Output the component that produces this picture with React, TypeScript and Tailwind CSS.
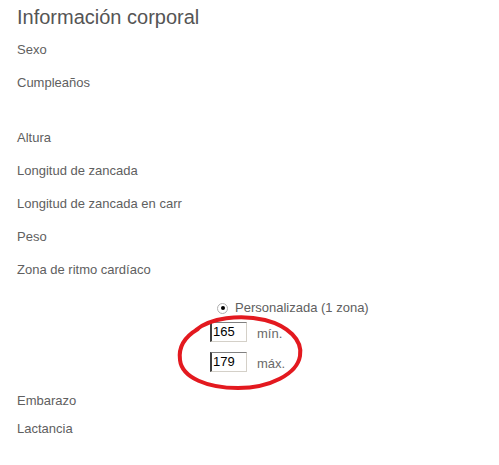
import React from "react";

const Label = ({ children, h = "h-[33px] leading-[33px]" }: { children: React.ReactNode; h?: string }) => (
  <div className={`${h} text-[13px] text-[#606060] whitespace-nowrap`}>{children}</div>
);

const Field = ({ value, unit, className }: { value: string; unit: string; className?: string }) => (
  <div className={`flex items-center ${className ?? ""}`}>
    <div className="w-[37px] h-[20px] border-t border-t-[#808080] border-l-2 border-l-[#404040] border-r border-r-[#d4d0c8] border-b border-b-[#d4d0c8] bg-white pl-[1px] text-[13px] leading-[17px] text-black">
      {value}
    </div>
    <span className="ml-[10px] text-[13px] leading-[16px] text-[#6a6a6a] pt-[3px]">{unit}</span>
  </div>
);

export default function App() {
  return (
    <div
      className="relative w-[499px] h-[465px] bg-white overflow-hidden pl-[17px]"
      style={{ fontFamily: '"Liberation Sans", Arial, sans-serif' }}
    >
      <h1 className="pt-[5px] h-[29px] text-[20px] leading-[24px] text-[#555555] font-normal">
        Información corporal
      </h1>
      <div className="mt-[4px] flex flex-col">
        <Label>Sexo</Label>
        <Label>Cumpleaños</Label>
        <div className="h-[22px]" />
        <Label>Altura</Label>
        <Label>Longitud de zancada</Label>
        <Label>Longitud de zancada en carr</Label>
        <Label>Peso</Label>
        <Label>Zona de ritmo cardíaco</Label>
        <div className="mt-[14px] pl-[200px] flex items-center h-[16px]">
          <div className="w-[11px] h-[11px] rounded-full border border-[#b0b0b0] bg-white flex items-center justify-center">
            <div className="w-[4px] h-[4px] rounded-full bg-black" />
          </div>
          <span className="ml-[7px] text-[13px] leading-[16px] text-[#606060]">Personalizada (1 zona)</span>
        </div>
        <div className="pl-[193px]">
          <Field value="165" unit="mín." className="mt-[6px]" />
          <Field value="179" unit="máx." className="mt-[10px]" />
        </div>
        <div className="mt-[15px]">
          <Label h="h-[28px] leading-[28px]">Embarazo</Label>
          <Label h="h-[28px] leading-[28px]">Lactancia</Label>
        </div>
      </div>
      <svg
        className="absolute left-[170px] top-[308px] pointer-events-none"
        width="140"
        height="90"
        viewBox="0 0 140 90"
      >
        <path
          d="M 26 22 C 40 10, 70 6, 95 12 C 118 18, 133 32, 130 48 C 127 66, 100 80, 68 80 C 38 80, 12 70, 10 52 C 8 38, 16 28, 28 21"
          fill="none"
          stroke="#e3191f"
          strokeWidth="4"
          strokeLinecap="round"
        />
      </svg>
    </div>
  );
}
